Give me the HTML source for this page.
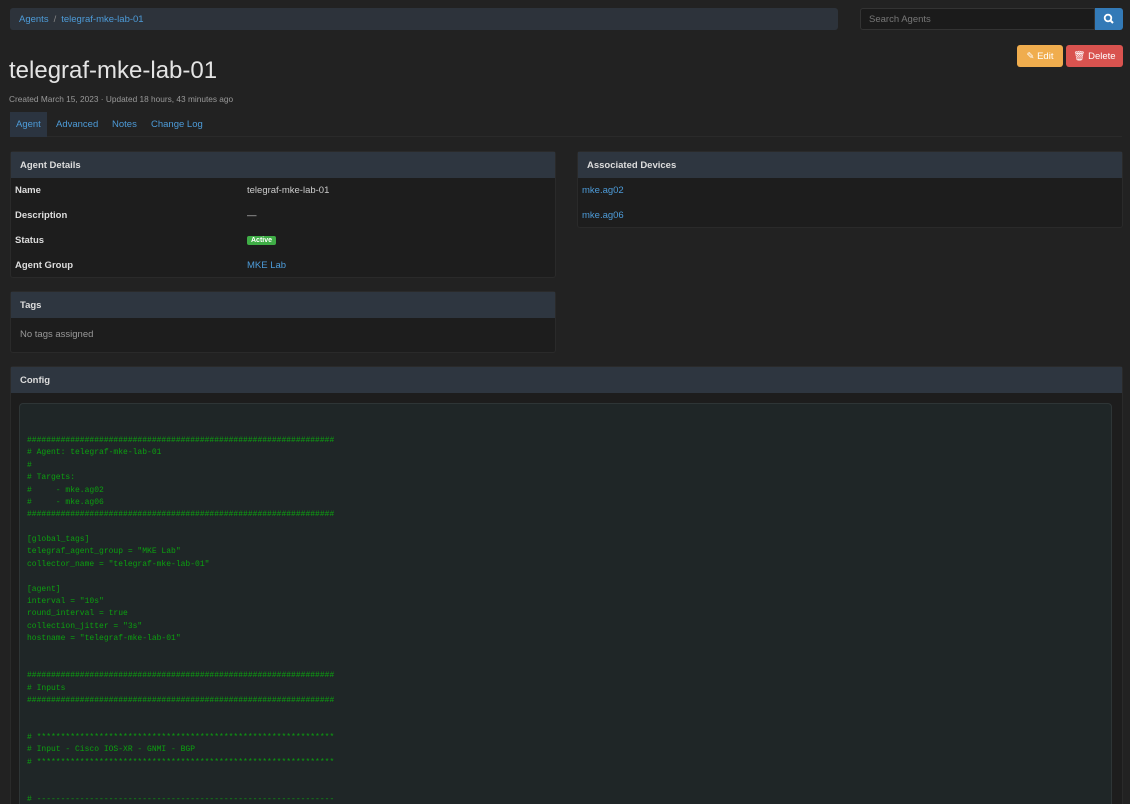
<!DOCTYPE html>
<html style="width:1130px;height:804px;overflow:hidden"><head><meta charset="utf-8"><style>
*{box-sizing:border-box;margin:0;padding:0}
body{width:1130px;height:804px;overflow:hidden;background:#222;font-family:"Liberation Sans",sans-serif;font-size:10px;color:#ddd;position:relative}
a{color:#4d9bd8;text-decoration:none}
.abs{position:absolute}
.bc{left:10px;top:8px;width:828px;height:22px;background:#2d333b;border-radius:3px;padding:6px 9px;font-size:9.5px}
.bc span{color:#888;margin:0 5px}
.search{left:860px;top:8px;width:235px;height:22px;background:#1b1b1b;border:1px solid #333;border-radius:3px 0 0 3px;color:#777;font-size:9.5px;padding:5px 8px}
.sbtn{left:1095px;top:8px;width:28px;height:22px;background:#337ab7;border-radius:0 3px 3px 0}
.btn{top:45px;height:22px;border-radius:3px;color:#fff;font-size:9.5px;padding:6px 0 0 0;text-align:center}
h1{position:absolute;left:9px;top:57px;font-size:24px;font-weight:normal;color:#e4e4e4}
.sub{left:9px;top:94px;font-size:8.3px;color:#999}
.tabs{left:10px;top:112px;width:1112px;height:25px;border-bottom:1px solid #2a2a2a}
.tab{position:absolute;top:0;height:25px;padding:7px 6px;font-size:9.5px;color:#4d9bd8}
.panel{background:#1d1d1d;border:1px solid #2a2a2a;border-radius:3px}
.ph{background:#2e3640;height:26px;padding:8px 9px;font-size:9.5px;font-weight:bold;color:#ddd}
.row{height:25px;padding:7px 4px;font-size:9.5px;position:relative}
.row b{color:#ddd}
.row .v{position:absolute;left:236px;top:7px;color:#ccc}
.row a.v{color:#4d9bd8}
pre{font-family:"Liberation Mono",monospace;font-size:8px;line-height:12.37px;color:#0ca010;margin:0}
</style></head><body>
<div class="abs bc"><a>Agents</a><span>/</span><a>telegraf-mke-lab-01</a></div>
<div class="abs search">Search Agents</div>
<div class="abs sbtn"><svg width="28" height="22"><circle cx="13" cy="10" r="3.3" stroke="#fff" stroke-width="1.8" fill="none"/><line x1="15.5" y1="12.5" x2="18" y2="15" stroke="#fff" stroke-width="2"/></svg></div>
<div class="abs btn" style="left:1017px;width:46px;background:#f0ad4e">✎ Edit</div>
<div class="abs btn" style="left:1066px;width:57px;background:#d9534f">🗑 Delete</div>
<h1>telegraf-mke-lab-01</h1>
<div class="abs sub">Created March 15, 2023 · Updated 18 hours, 43 minutes ago</div>
<div class="abs tabs">
<div class="tab" style="left:0;width:37px;background:#2b3440">Agent</div>
<div class="tab" style="left:40px">Advanced</div>
<div class="tab" style="left:96px">Notes</div>
<div class="tab" style="left:135px">Change Log</div>
</div>
<div class="abs panel" style="left:10px;top:151px;width:546px;height:127px">
<div class="ph">Agent Details</div>
<div class="row"><b>Name</b><span class="v">telegraf-mke-lab-01</span></div>
<div class="row"><b>Description</b><span class="v">—</span></div>
<div class="row"><b>Status</b><span class="v" style="top:8px;background:#3fad46;color:#fff;font-size:7px;font-weight:bold;padding:1px 4px;border-radius:2px">Active</span></div>
<div class="row"><b>Agent Group</b><a class="v">MKE Lab</a></div>
</div>
<div class="abs panel" style="left:10px;top:291px;width:546px;height:62px">
<div class="ph">Tags</div>
<div class="row" style="padding:11px 9px;color:#999">No tags assigned</div>
</div>
<div class="abs panel" style="left:577px;top:151px;width:546px;height:77px">
<div class="ph">Associated Devices</div>
<div class="row"><a>mke.ag02</a></div>
<div class="row"><a>mke.ag06</a></div>
</div>
<div class="abs panel" style="left:10px;top:366px;width:1113px;height:450px">
<div class="ph">Config</div>
<div class="abs" style="left:8px;top:36px;width:1093px;height:420px;background:#1f2627;border:1px solid #2e3536;border-radius:4px;padding:31px 7px">
<pre>################################################################
# Agent: telegraf-mke-lab-01
#
# Targets:
#     - mke.ag02
#     - mke.ag06
################################################################

[global_tags]
telegraf_agent_group = "MKE Lab"
collector_name = "telegraf-mke-lab-01"

[agent]
interval = "10s"
round_interval = true
collection_jitter = "3s"
hostname = "telegraf-mke-lab-01"


################################################################
# Inputs
################################################################


# **************************************************************
# Input - Cisco IOS-XR - GNMI - BGP
# **************************************************************


# --------------------------------------------------------------</pre>
</div>
</div>
</body></html>
